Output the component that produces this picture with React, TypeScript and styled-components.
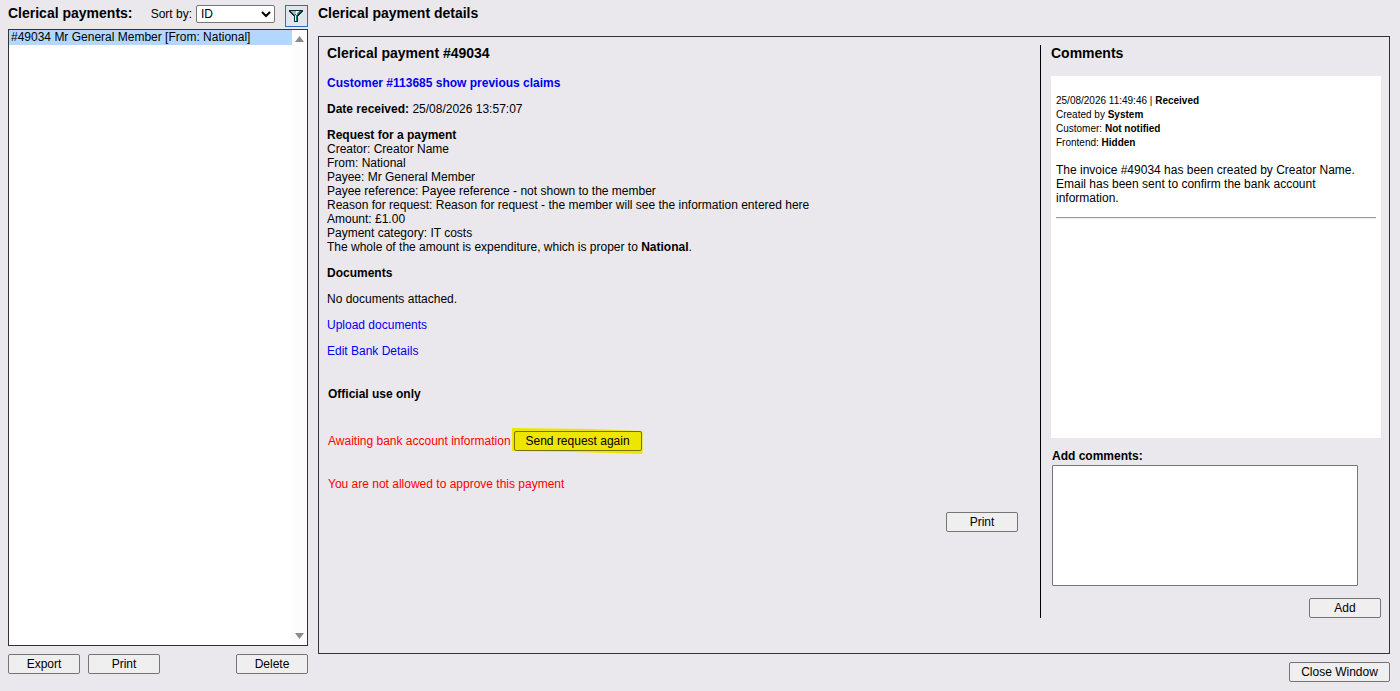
import { FC, ReactNode, useState } from 'react'
import styled, { createGlobalStyle } from 'styled-components'

interface Comment {
  date: string
  status: string
  author: string
  customer: string
  frontend: string
  body: string
}

const payments = ['#49034 Mr General Member [From: National]']

const requestLines = [
  'Creator: Creator Name',
  'From: National',
  'Payee: Mr General Member',
  'Payee reference: Payee reference - not shown to the member',
  'Reason for request: Reason for request - the member will see the information entered here',
  'Amount: £1.00',
  'Payment category: IT costs'
]

const comments: Comment[] = [
  {
    date: '25/08/2026 11:49:46',
    status: 'Received',
    author: 'System',
    customer: 'Not notified',
    frontend: 'Hidden',
    body: 'The invoice #49034 has been created by Creator Name. Email has been sent to confirm the bank account information.'
  }
]

const FilterIcon: FC = () => (
  <svg width="14" height="12" viewBox="0 0 14 12" shapeRendering="crispEdges">
    <path d="M0 0h14v2h-1v1h-1v1h-1v1h-1v1H9v6H5V6H4V5H3V4H2V3H1V2H0z" fill="#12282a" />
    <path d="M2 1h6v1H2zM3 2h4v1H3zM4 3h3v1H4zM5 4h1v1H5z" fill="#a9b1b3" />
    <path d="M7 1h3v1H9v1H8v1H7v1H6v6h1V6h1V4H6V3h1z" fill="#e9f1f1" />
    <path d="M10 1h2v1h-1v1h-1v1H9v1H8v6H7V5h1V3h1V2h1z" fill="#158586" />
  </svg>
)

const ListScrollbar: FC = () => (
  <Scrollbar>
    <svg width="9" height="6" viewBox="0 0 9 6">
      <path d="M4.5 0L9 6H0z" fill="#8b8b8b" />
    </svg>
    <svg width="9" height="6" viewBox="0 0 9 6">
      <path d="M0 0h9L4.5 6z" fill="#8b8b8b" />
    </svg>
  </Scrollbar>
)

const Section: FC<{ title: string; children?: ReactNode }> = ({ title, children }) => (
  <Paragraph>
    <b>{title}</b>
    {children}
  </Paragraph>
)

const App: FC = () => {
  const [selected, setSelected] = useState(payments[0])
  const [text, setText] = useState('')

  return (
    <>
      <GlobalStyle />
      <Page>
        <Sidebar>
          <SidebarHeader>
            <Title>Clerical payments:</Title>
            <SortLabel htmlFor="sort">Sort by:</SortLabel>
            <SortSelect id="sort" defaultValue="ID">
              <option>ID</option>
            </SortSelect>
            <FilterButton aria-label="Filter">
              <FilterIcon />
            </FilterButton>
          </SidebarHeader>
          <ListBox>
            <ListItems>
              {payments.map((item) => (
                <ListItem key={item} $active={item === selected} onClick={() => setSelected(item)}>
                  {item}
                </ListItem>
              ))}
            </ListItems>
            <ListScrollbar />
          </ListBox>
          <SidebarActions>
            <Button>Export</Button>
            <Button>Print</Button>
            <Spacer />
            <Button>Delete</Button>
          </SidebarActions>
        </Sidebar>

        <Main>
          <MainHeader>
            <Title>Clerical payment details</Title>
          </MainHeader>
          <DetailsBox>
            <Details>
              <Title>Clerical payment #49034</Title>
              <CustomerLine>
                <Link href="#">Customer #113685 show previous claims</Link>
              </CustomerLine>
              <Paragraph>
                <b>Date received:</b> 25/08/2026 13:57:07
              </Paragraph>
              <Section title="Request for a payment">
                {requestLines.map((line) => (
                  <div key={line}>{line}</div>
                ))}
                <div>
                  The whole of the amount is expenditure, which is proper to <b>National</b>.
                </div>
              </Section>
              <Section title="Documents" />
              <Paragraph>No documents attached.</Paragraph>
              <Paragraph>
                <Link href="#">Upload documents</Link>
              </Paragraph>
              <Paragraph>
                <Link href="#">Edit Bank Details</Link>
              </Paragraph>
              <Official>
                <b>Official use only</b>
                <BankRow>
                  Awaiting bank account information
                  <Highlight>
                    <SendButton>Send request again</SendButton>
                  </Highlight>
                </BankRow>
                <Warning>You are not allowed to approve this payment</Warning>
              </Official>
              <PrintRow>
                <Button>Print</Button>
              </PrintRow>
            </Details>
            <Comments>
              <Title>Comments</Title>
              <CommentList>
                {comments.map((comment) => (
                  <CommentItem key={comment.date}>
                    <CommentMeta>
                      <div>
                        {comment.date} | <b>{comment.status}</b>
                      </div>
                      <div>
                        Created by <b>{comment.author}</b>
                      </div>
                      <div>
                        Customer: <b>{comment.customer}</b>
                      </div>
                      <div>
                        Frontend: <b>{comment.frontend}</b>
                      </div>
                    </CommentMeta>
                    <CommentBody>{comment.body}</CommentBody>
                  </CommentItem>
                ))}
              </CommentList>
              <CommentLabel htmlFor="comment">Add comments:</CommentLabel>
              <CommentInput id="comment" value={text} onChange={(e) => setText(e.target.value)} />
              <AddRow>
                <Button>Add</Button>
              </AddRow>
            </Comments>
          </DetailsBox>
          <Footer>
            <Button $width={101}>Close Window</Button>
          </Footer>
        </Main>
      </Page>
    </>
  )
}

const GlobalStyle = createGlobalStyle`
  * {
    box-sizing: border-box;
  }
  body {
    margin: 0;
    background: #eae8ed;
    color: #000;
    font-family: 'Liberation Sans', Arial, sans-serif;
    font-size: 12px;
    line-height: 14px;
    overflow: hidden;
  }
`

const Page = styled.div`
  display: flex;
  gap: 10px;
  height: 691px;
  padding: 0 10px 0 8px;
`

const Sidebar = styled.div`
  display: flex;
  flex-direction: column;
  width: 300px;
`

const SidebarHeader = styled.div`
  display: flex;
  align-items: flex-start;
  height: 29px;
  padding-top: 5px;
`

const Title = styled.h1`
  margin: 0;
  font-size: 14px;
  line-height: 16px;
  font-weight: bold;
  white-space: nowrap;
`

const SortLabel = styled.label`
  margin: 2px 4px 0 auto;
`

const SortSelect = styled.select`
  width: 79px;
  height: 18px;
  margin-right: 10px;
  padding: 0;
  border: 1px solid #767676;
  border-radius: 2px;
  background: #fff;
  color: #000;
  font-family: inherit;
  font-size: 12px;
`

const FilterButton = styled.button`
  display: flex;
  align-items: flex-start;
  width: 23px;
  height: 22px;
  padding: 4px 0 0 3px;
  border: 1px solid #316ac5;
  background: #dfe6ec;
`

const ListBox = styled.div`
  display: flex;
  height: 617px;
  border: 1px solid #333;
  background: #fff;
`

const ListItems = styled.div`
  flex: 1;
`

const ListItem = styled.div<{ $active: boolean }>`
  height: 15px;
  padding-left: 2px;
  background: ${({ $active }) => ($active ? '#b3d7ff' : 'transparent')};
  cursor: default;
`

const Scrollbar = styled.div`
  display: flex;
  flex-direction: column;
  justify-content: space-between;
  align-items: center;
  width: 15px;
  padding: 6px 0;
  background: #fcfcfc;
`

const SidebarActions = styled.div`
  display: flex;
  gap: 8px;
  margin-top: 8px;
`

const Spacer = styled.div`
  flex: 1;
`

const Button = styled.button<{ $width?: number }>`
  width: ${({ $width }) => $width ?? 72}px;
  height: 20px;
  padding: 0;
  border: 1px solid #767676;
  border-radius: 2px;
  background: #efefef;
  color: #000;
  font-family: inherit;
  font-size: 12px;
  line-height: 14px;
  white-space: nowrap;
`

const Main = styled.div`
  flex: 1;
  display: flex;
  flex-direction: column;
`

const MainHeader = styled.div`
  height: 36px;
  padding-top: 5px;
`

const DetailsBox = styled.div`
  display: flex;
  height: 618px;
  padding: 8px;
  border: 1px solid #333;
`

const Details = styled.div`
  width: 714px;
  height: 573px;
  border-right: 1px solid #000;
`

const Paragraph = styled.div`
  margin-bottom: 12px;
`

const CustomerLine = styled(Paragraph)`
  margin-top: 15px;
  font-weight: bold;
`

const Link = styled.a`
  color: #0000ee;
  text-decoration: none;
`

const Official = styled.div`
  margin-top: 29px;
  padding-left: 1px;
`

const BankRow = styled.div`
  display: flex;
  align-items: center;
  gap: 3px;
  height: 20px;
  margin-top: 30px;
  color: #ff0000;
`

/* uneven marker stroke behind the button */
const Highlight = styled.span`
  padding: 3px 1px 3px 2px;
  margin-left: -2px;
  background: #ede600;
  clip-path: polygon(0 0, 60% 1px, 100% 3px, 100% 100%, 45% calc(100% - 2px), 0 calc(100% - 3px));
`

const SendButton = styled(Button)`
  display: block;
  width: 128px;
  border-color: #767300;
  background: #efe600;
`

const Warning = styled.div`
  margin-top: 26px;
  color: #ff0000;
`

const PrintRow = styled.div`
  display: flex;
  justify-content: flex-end;
  margin-top: 21px;
  padding-right: 22px;
`

const Comments = styled.div`
  flex: 1;
  padding-left: 10px;
`

const CommentList = styled.div`
  height: 362px;
  margin-top: 15px;
  padding: 18px 5px;
  background: #fff;
`

const CommentItem = styled.div`
  padding-bottom: 12px;
  border-bottom: 1px solid #9a9a9a;
  box-shadow: 0 1px 0 #eee;
`

const CommentMeta = styled.div`
  font-size: 10px;
`

const CommentBody = styled.div`
  margin-top: 13px;
`

const CommentLabel = styled.label`
  display: block;
  margin: 11px 0 2px 1px;
  font-weight: bold;
`

const CommentInput = styled.textarea`
  display: block;
  width: 306px;
  height: 121px;
  margin-left: 1px;
  border: 1px solid #767676;
  border-radius: 1px;
  background: #fff;
  resize: none;
`

const AddRow = styled.div`
  display: flex;
  justify-content: flex-end;
  margin-top: 12px;
`

const Footer = styled.div`
  display: flex;
  justify-content: flex-end;
  margin-top: 8px;
`

export default App
